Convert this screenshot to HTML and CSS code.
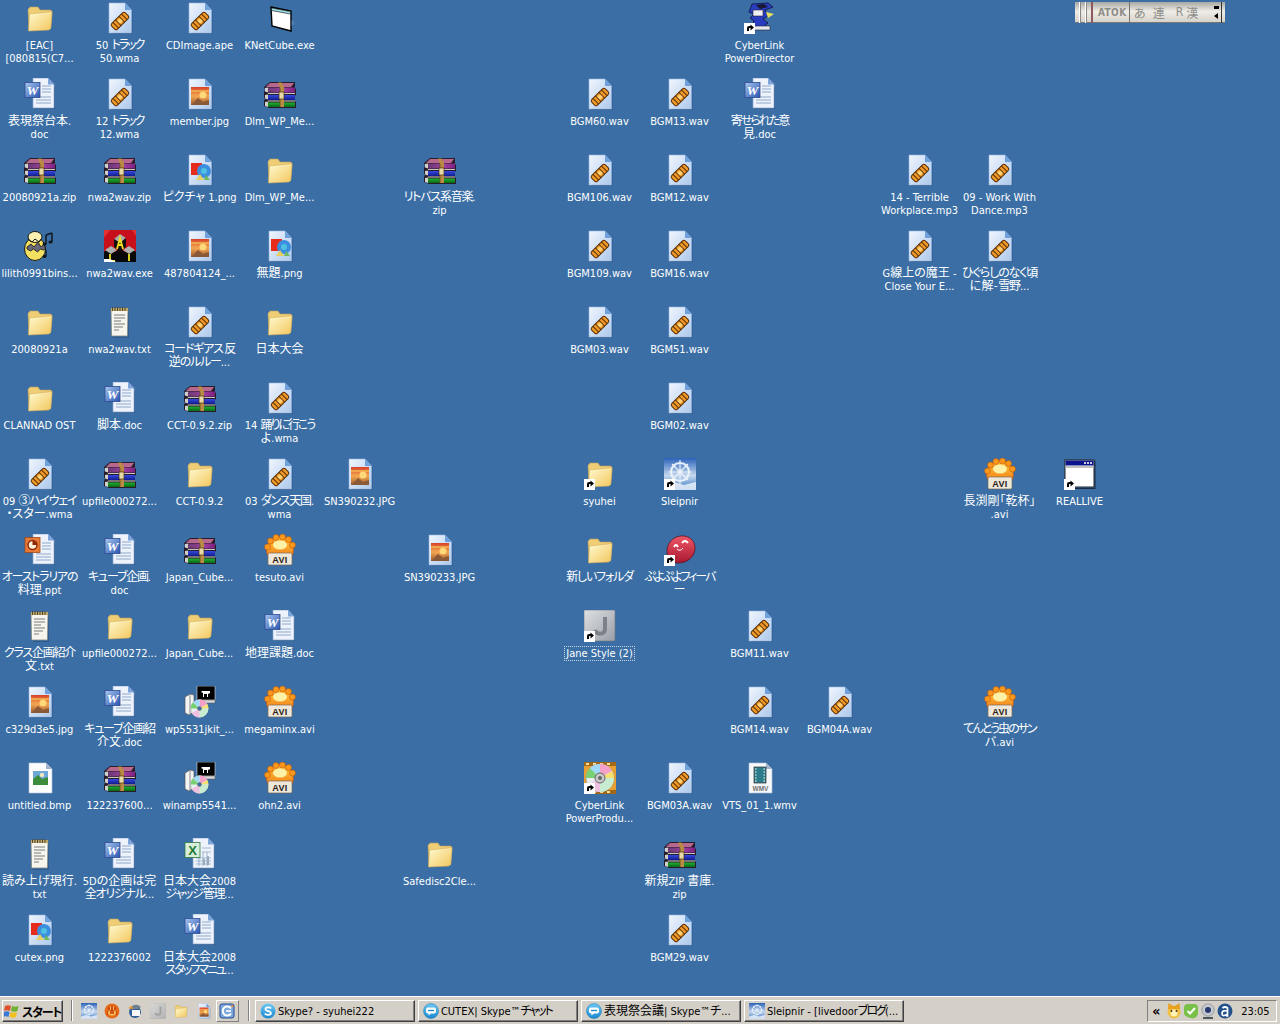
FILE: index.html
```html
<!DOCTYPE html>
<html lang="ja">
<head>
<meta charset="utf-8">
<title>Desktop</title>
<link rel="stylesheet" href="styles.css">
</head>
<body>
<svg class="defs" aria-hidden="true">
<defs>
<linearGradient id="gFolder" x1="0" y1="0" x2="1" y2="1"><stop offset="0" stop-color="#fffbd2"/><stop offset="1" stop-color="#f2c65c"/></linearGradient>
<linearGradient id="gPage" x1="0" y1="0" x2="1" y2="1"><stop offset="0" stop-color="#f0f6ff"/><stop offset="1" stop-color="#adc9ec"/></linearGradient>
<linearGradient id="gPic" x1="0" y1="0" x2="0" y2="1"><stop offset="0" stop-color="#d8402a"/><stop offset=".5" stop-color="#f4a850"/><stop offset="1" stop-color="#9c5a30"/></linearGradient>
<linearGradient id="gWord" x1="0" y1="0" x2="1" y2="1"><stop offset="0" stop-color="#a9c6ee"/><stop offset="1" stop-color="#2a55b0"/></linearGradient>
<linearGradient id="gAvi" x1="0" y1="0" x2="0" y2="1"><stop offset="0" stop-color="#ffc838"/><stop offset="1" stop-color="#ee6a12"/></linearGradient>
<linearGradient id="gSlp" x1="0" y1="0" x2="0" y2="1"><stop offset="0" stop-color="#2a62b8"/><stop offset=".55" stop-color="#c4d8ee"/><stop offset="1" stop-color="#3a78c4"/></linearGradient>
<linearGradient id="gJane" x1="0" y1="0" x2="1" y2="1"><stop offset="0" stop-color="#dfe1e4"/><stop offset="1" stop-color="#9a9ea6"/></linearGradient>
<linearGradient id="gPuyo" x1="0" y1="0" x2="0" y2="1"><stop offset="0" stop-color="#f05868"/><stop offset="1" stop-color="#a81830"/></linearGradient>
<linearGradient id="gSky" x1="0" y1="0" x2="0" y2="1"><stop offset="0" stop-color="#6cc8f4"/><stop offset="1" stop-color="#1a88d0"/></linearGradient>
<linearGradient id="gLid" x1="0" y1="0" x2="1" y2="0"><stop offset="0" stop-color="#6a3a70"/><stop offset=".6" stop-color="#a040a0"/><stop offset="1" stop-color="#7c2080"/></linearGradient>
<linearGradient id="gBlue" x1="0" y1="0" x2="0" y2="1"><stop offset="0" stop-color="#3848e0"/><stop offset="1" stop-color="#101c90"/></linearGradient>
<linearGradient id="gGreen" x1="0" y1="0" x2="0" y2="1"><stop offset="0" stop-color="#20b030"/><stop offset="1" stop-color="#086818"/></linearGradient>

<symbol id="cd" viewBox="0 0 32 32">
<circle cx="16" cy="16" r="15" fill="#e8eef0" stroke="#777" stroke-width=".5"/>
<path d="M16 16 16 1A15 15 0 0 1 29 8.500z" fill="#f4a0c8"/>
<path d="M16 16 29 8.500A15 15 0 0 1 31 16z" fill="#f8e070"/>
<path d="M16 16 1 16A15 15 0 0 1 5.400 5.400z" fill="#78d070"/>
<path d="M16 16 5.400 5.400A15 15 0 0 1 16 1z" fill="#a0d8f8"/>
<path d="M16 16 31 16A15 15 0 0 1 16 31z" fill="#c8ecd0"/>
<path d="M16 16 16 31A15 15 0 0 1 3 23.500z" fill="#f0c0e0"/>
</symbol>

<symbol id="folder" viewBox="0 0 32 32">
<path d="M5 28 4 7.500 6 5h8l2 3h11l1 2v2l-1.500 15z" fill="#efcd74" stroke="#b8a060" stroke-width=".6"/>
<path d="M4.500 29 5.500 12 28 9.500 26.800 26 25 28z" fill="url(#gFolder)" stroke="#d0ae5c" stroke-width=".6"/>
</symbol>

<symbol id="page" viewBox="0 0 32 32">
<path d="M28.500 9v23H7v-1h20.500V9z" fill="#1c3f6e" opacity=".45"/>
<path d="M5 1h16l6.500 7v23H5z" fill="url(#gPage)" stroke="#9ab6dc" stroke-width=".6"/>
<path d="M21 1v7h6.500z" fill="#6ea0dc"/>
</symbol>

<symbol id="wamp" viewBox="0 0 32 32">
<use href="#page"/>
<g transform="rotate(-45 16 19)">
<rect x="6.500" y="15" width="19" height="8" rx="2" fill="#f29a28" stroke="#5a3008" stroke-width="1"/>
<path d="M10 15v8M13.500 15v8M18.500 15v8M22 15v8" stroke="#5a3008" stroke-width="1"/>
<rect x="14" y="17" width="4" height="4" fill="#ffd070"/>
</g>
</symbol>

<symbol id="jpg" viewBox="0 0 32 32">
<use href="#page"/>
<rect x="7" y="9" width="18" height="18" fill="url(#gPic)"/>
<path d="M7 13h18" stroke="#f8e060" stroke-width="1"/>
<circle cx="19" cy="17" r="3.500" fill="#ffd878"/>
<path d="M7 27l7-7 5 4 6-2v5z" fill="#8a5a38"/>
</symbol>

<symbol id="png" viewBox="0 0 32 32">
<use href="#page"/>
<rect x="7" y="9" width="11" height="12" fill="#e82c1c"/>
<circle cx="20" cy="17" r="7" fill="#3c8ee0"/>
<circle cx="20" cy="17" r="3" fill="#50c0e0"/>
<path d="M12 26l4-6 4 6z" fill="#e8d060"/>
<path d="M20 26l2-5 4 5z" fill="#70b860"/>
</symbol>

<symbol id="rar" viewBox="0 0 32 32">
<path d="M0 9 6 4h25v6l1 1v6l-1 1v5l1 1v6H5l-5-2v-5l1-2-1-2v-5l1-2z" fill="#281c28"/>
<path d="M6 5h24l-3 4H2z" fill="#b8688c"/>
<path d="M4 9.500h27v5H4z" fill="url(#gLid)"/>
<path d="M4 17h27v5H4z" fill="url(#gBlue)"/>
<path d="M4 24.500h27V29H4z" fill="url(#gGreen)"/>
<path d="M1 10l3-.5v5l-3-1zM1 17l3-.5v5l-3-1zM1 24l3-.5V29l-3-1z" fill="#d0d0c8"/>
<path d="M4 15.500h27M4 23h27" stroke="#c8c8c0" stroke-width="1.200"/>
<path d="M14 4.500h3.500L20 9v20h-4V10z" fill="#b88c44"/>
<path d="M16 10v19" stroke="#704c18" stroke-width=".8"/>
<rect x="15" y="14" width="5" height="7" fill="#e8d8a8" stroke="#443010" stroke-width=".7"/>
</symbol>

<symbol id="word" viewBox="0 0 32 32">
<path d="M31 9v22H10v-1h20V9z" fill="#1c3f6e" opacity=".45"/>
<path d="M9 0h15l6 6.500V30H9z" fill="#eef3fb" stroke="#8aa4cc" stroke-width=".7"/>
<path d="M24 0v6.500h6z" fill="#7ea4dc"/>
<path d="M18 8h9M18 11h9M18 14h9M12 19h15M12 22h15M12 25h15" stroke="#8fa8cc" stroke-width="1"/>
<rect x="1" y="4.500" width="15" height="15" fill="url(#gWord)" stroke="#2c4c90" stroke-width=".8"/>
<text x="8.500" y="16.500" class="glyph gw" text-anchor="middle">W</text>
</symbol>

<symbol id="xls" viewBox="0 0 32 32">
<path d="M31 9v22H10v-1h20V9z" fill="#1c3f6e" opacity=".45"/>
<path d="M9 0h15l6 6.500V30H9z" fill="#eef3fb" stroke="#8aa4cc" stroke-width=".7"/>
<path d="M24 0v6.500h6z" fill="#7ea4dc"/>
<path d="M12 20h15M12 23h15M12 26h15M15 17v11M19 14v14M23 14v14M18 10h9M18 14h9" stroke="#8fa8cc" stroke-width=".8"/>
<rect x="1" y="4.500" width="15" height="15" fill="#d8eed8" stroke="#307a40" stroke-width=".8"/>
<text x="8.500" y="16.500" class="glyph gx" text-anchor="middle">X</text>
<path d="M19 27v-6h2v6zM23 27v-9h2v9z" fill="#9ab"/>
</symbol>

<symbol id="ppt" viewBox="0 0 32 32">
<path d="M31 9v22H10v-1h20V9z" fill="#1c3f6e" opacity=".45"/>
<path d="M9 0h15l6 6.500V30H9z" fill="#eef3fb" stroke="#8aa4cc" stroke-width=".7"/>
<path d="M24 0v6.500h6z" fill="#7ea4dc"/>
<path d="M18 9h9M18 12h9M18 15h9M12 20h15M12 23h15M12 26h15" stroke="#8fa8cc" stroke-width="1"/>
<rect x="1" y="3.500" width="15" height="15" fill="#e87a38" stroke="#a04818" stroke-width=".8"/>
<circle cx="8.500" cy="11" r="4.500" fill="#fff0d8" stroke="#902808" stroke-width="1.500"/>
<path d="M8.500 11V6.500A4.500 4.500 0 0 1 13 11z" fill="#902808"/>
</symbol>

<symbol id="note" viewBox="0 0 32 32">
<path d="M25 5v27H9v-1h15V5z" fill="#1c3f6e" opacity=".4"/>
<path d="M7 3h17l-.5 27H7.500z" fill="#f6f6ee" stroke="#7a7a70" stroke-width=".7"/>
<path d="M7 2h17v3H7z" fill="#c0a868"/>
<path d="M8.500 1v4M11 1v4M13.500 1v4M16 1v4M18.500 1v4M21 1v4" stroke="#504830" stroke-width="1"/>
<path d="M10 9h11M10 12h11M10 15h7M10 18h11M10 21h9M10 24h5" stroke="#7c7c78" stroke-width="1"/>
</symbol>

<symbol id="avi" viewBox="0 0 32 32">
<circle cx="16" cy="16" r="13.500" fill="url(#gAvi)" stroke="#c04a08" stroke-width=".6"/>
<g fill="#f8981c" stroke="#b84c08" stroke-width=".5">
<circle cx="3.500" cy="13" r="3"/><circle cx="6.500" cy="7" r="3"/><circle cx="12" cy="3.500" r="3"/><circle cx="18.500" cy="3" r="3"/><circle cx="24.500" cy="5.500" r="3"/><circle cx="28.500" cy="11" r="3"/>
</g>
<ellipse cx="16" cy="11" rx="7" ry="4.500" fill="#fff0a8"/>
<rect x="4" y="19" width="24" height="12" rx="1.500" fill="#eee7da" stroke="#7a6a58" stroke-width=".7"/>
<text x="16" y="29" class="glyph ga" text-anchor="middle">AVI</text>
</symbol>

<symbol id="setup" viewBox="0 0 32 32">
<path d="M1 11l5-3 4 1v17l-5 3-4-2z" fill="#f4f4f4" stroke="#555" stroke-width=".7"/>
<path d="M6 9v19" stroke="#888" stroke-width="1"/>
<rect x="13" y="0" width="18" height="14" fill="#000" stroke="#ddd" stroke-width=".6"/>
<path d="M18 5h8v2l-2 1v3h-1V8h-3v3h-1V7l-2-1z" fill="#fff"/>
<rect x="14" y="14" width="17" height="3" fill="#d8d8d8" stroke="#555" stroke-width=".5"/>
<use href="#cd" x="6" y="13" width="19" height="19"/>
<circle cx="15.500" cy="22.500" r="2" fill="#3a6ea5" stroke="#666" stroke-width=".5"/>
</symbol>

<symbol id="cube" viewBox="0 0 32 32">
<path d="M7 5 27 9v20L8 24z" fill="#fff" stroke="#000" stroke-width="1.400"/>
<path d="M7.500 6 26.500 9.500v2.500L7.500 8.500z" fill="#9fe0e8" stroke="#000" stroke-width=".6"/>
<path d="M27.500 18l4 3-4 3z" fill="#5f83ae" opacity=".7"/>
</symbol>

<symbol id="win" viewBox="0 0 32 32">
<rect x="1" y="2" width="29" height="27" fill="#fff" stroke="#222" stroke-width="1"/>
<path d="M30.500 3v27H3v1h28.500V3z" fill="#1a2a40"/>
<rect x="1.500" y="2.500" width="28" height="5" fill="#0c148c"/>
<path d="M20 5h2M23 5h2M26 5h2" stroke="#ccd" stroke-width="2"/>
<rect x="1.500" y="8" width="28" height="2" fill="#c0c0c0"/>
</symbol>

<symbol id="lilith" viewBox="0 0 32 32">
<ellipse cx="11" cy="19" rx="10.500" ry="11.500" fill="#f4e060" stroke="#1a1a1a" stroke-width="1"/>
<path d="M3 17 7 14l3 3 4-5 3 5 3-3 1.500 5-2 1-3-1-3 3-4-3-3 2-3.500-2z" fill="#68687a" stroke="#111" stroke-width=".8"/>
<ellipse cx="11" cy="7" rx="7" ry="5.500" fill="#fbf0b0" stroke="#1a1a1a" stroke-width="1"/>
<path d="M4 9l4 3 3-3 4 3 2-3" fill="none" stroke="#111" stroke-width="1"/>
<path d="M22 5v9M28 3v9M22 5l6-2" fill="none" stroke="#101820" stroke-width="1.500"/>
<ellipse cx="20.500" cy="14" rx="2" ry="1.500" fill="#101820"/><ellipse cx="26.500" cy="12" rx="2" ry="1.500" fill="#101820"/>
<path d="M22 20v6" stroke="#101820" stroke-width="1.300"/><ellipse cx="20.500" cy="26.500" rx="2" ry="1.500" fill="#101820"/>
</symbol>

<symbol id="nwa" viewBox="0 0 32 32">
<rect width="32" height="32" fill="#c8101c"/>
<path d="M0 0h6L0 8zM28 0h4v6zM0 27l6 5H0z" fill="#e83030"/>
<path d="M0 32V22l5-4 6 4 5-4 5 4 5-4 6 4v10z" fill="#080808"/>
<path d="M10 9l6-5 6 4-6 5z" fill="#a8a8a8"/><path d="M10 9v8l6 4v-8zM22 8v9l-6 4v-8z" fill="#101010"/>
<path d="M1 20l6-4 6 4-6 4zM19 20l6-4 6 4-6 4z" fill="#b0b0b0"/>
<path d="M13 19l3-11 3 11M14.500 15h3M6 24v7h5M25 24v7" fill="none" stroke="#f0e020" stroke-width="1.800"/>
<path d="M0 29h6l6 3H0z" fill="#fff"/>
</symbol>

<symbol id="bmp" viewBox="0 0 32 32">
<path d="M5 1h17l6 6v24H5z" fill="#fdfdfd" stroke="#b8c4d8" stroke-width=".6"/>
<path d="M22 1v6h6z" fill="#a0b4d0"/>
<rect x="9" y="9" width="15" height="14" fill="#6ea8d8"/>
<path d="M9 23v-6l5-4 4 4 6-2v8z" fill="#3c8c3c"/>
<circle cx="18" cy="13" r="2.200" fill="#f0e8c0"/>
</symbol>

<symbol id="wmv" viewBox="0 0 32 32">
<path d="M5 1h17l6 6v24H5z" fill="#f6f8fa" stroke="#b8c4d8" stroke-width=".6"/>
<path d="M22 1v6h6z" fill="#a0b4d0"/>
<rect x="10" y="5" width="12" height="16" fill="#2c7c8c" stroke="#333" stroke-width=".7"/>
<path d="M11 7h1.500M11 10h1.500M11 13h1.500M11 16h1.500M11 19h1.500M19.500 7H21M19.500 10H21M19.500 13H21M19.500 16H21M19.500 19H21" stroke="#fff" stroke-width="1.200"/>
<text x="16.500" y="29" class="glyph gv" text-anchor="middle">WMV</text>
</symbol>

<symbol id="slp" viewBox="0 0 32 32">
<rect width="32" height="32" fill="url(#gSlp)"/>
<circle cx="16" cy="14" r="9" fill="none" stroke="#e8f0fa" stroke-width="2.200"/>
<circle cx="16" cy="14" r="2.500" fill="#e8f0fa"/>
<path d="M16 2v24M4 14h24M8 6l16 16M24 6 8 22" stroke="#e8f0fa" stroke-width="1.200"/>
<path d="M0 27l10-3 10 3 12-3v8H0z" fill="#f4f8fc" opacity=".8"/>
</symbol>

<symbol id="puyo" viewBox="0 0 32 32">
<path d="M3 17C3 7 12 1 20 2s11 7 11 12c0 9-8 15-17 15-6 0-11-4-11-12z" fill="url(#gPuyo)" stroke="#601020" stroke-width=".8"/>
<path d="M10 13q2-4 4 0M18 9q3-4 6 0" fill="none" stroke="#fff" stroke-width="1.800"/>
<path d="M13 15q3 3 6-1" fill="none" stroke="#fff" stroke-width="1"/>
</symbol>

<symbol id="jane" viewBox="0 0 32 32">
<rect width="31" height="31" rx="1" fill="url(#gJane)" stroke="#6f7680" stroke-width=".6"/>
<path d="M21 7v12c0 6-9 6-10 1" fill="none" stroke="#7c8088" stroke-width="4"/>
</symbol>

<symbol id="prod" viewBox="0 0 32 32">
<rect width="32" height="32" fill="#e8a030"/>
<path d="M0 0h32v4H0zM0 28h32v4H0z" fill="#a06818"/>
<path d="M2 1h3v2H2zM9 1h3v2H9zM16 1h3v2h-3zM23 1h3v2h-3zM2 29h3v2H2zM9 29h3v2H9zM16 29h3v2h-3zM23 29h3v2h-3z" fill="#f8e0a0"/>
<use href="#cd" x="1" y="1" width="30" height="30"/>
<circle cx="16" cy="16" r="5" fill="#c8c8c8" stroke="#666" stroke-width="1"/>
<circle cx="16" cy="16" r="2" fill="#666"/>
</symbol>

<symbol id="dir" viewBox="0 0 32 32">
<path d="M8 2 24 1l5 4-8 3 3 6-5 3 5 4-6 5H8l2-7-4-3 4-4-5-2z" fill="#2a3cc0" stroke="#101040" stroke-width=".8"/>
<path d="M9 8h10v6H9z" fill="#f0f0f4" stroke="#223" stroke-width=".6"/>
<path d="M12 3l8-1 4 3-8 2z" fill="#181830"/>
<path d="M6 24h20v4H6z" fill="#e8e8f0" stroke="#223" stroke-width=".6"/>
<path d="M22 10l8 2-6 4z" fill="#e8e060"/>
</symbol>

<symbol id="lnk" viewBox="0 0 32 32">
<rect x="0" y="21" width="11" height="11" fill="#fff"/>
<path d="M3 29v-3q0-2 2-2h1.500V22.500L10 25.500 6.500 28.500V26H5.500q-.5 0-.5 1v2z" fill="#000"/>
</symbol>

<symbol id="flag" viewBox="0 0 16 16">
<path d="M1 3q3-1.500 6 0l-1 5q-3-1.500-6 0z" fill="#e0502c"/>
<path d="M8 3q3 1.500 6.500 0l-1 5q-3.500 1.500-6.500 0z" fill="#70b030"/>
<path d="M0 9q3-1.500 5.500 0l-1 5q-3-1.500-5.500 0z" fill="#3878d8"/>
<path d="M6.500 9q3 1.500 6.500 0l-1 5q-3.500 1.500-6.500 0z" fill="#f0c020"/>
</symbol>

<symbol id="skype" viewBox="0 0 16 16">
<circle cx="8" cy="8" r="7.500" fill="url(#gSky)"/>
<path d="M11 5.500C10 4 5.500 4 5.500 6.200 5.500 8.500 11 7.500 11 10c0 2.300-5 2.300-6.200.5" fill="none" stroke="#fff" stroke-width="1.800"/>
</symbol>

<symbol id="chat" viewBox="0 0 16 16">
<circle cx="8" cy="8" r="7.500" fill="url(#gSky)" stroke="#1a78b8" stroke-width=".5"/>
<path d="M3 6.500q0-2 2-2h6q2 0 2 2v2q0 2-2 2H8l-2.500 2v-2H5q-2 0-2-2z" fill="#fff"/>
<path d="M5 7.500h6" stroke="#1a88d0" stroke-width="1.300"/>
</symbol>

<symbol id="fox" viewBox="0 0 16 16">
<circle cx="8" cy="9" r="6.500" fill="#f2c040"/>
<circle cx="8" cy="10" r="3.500" fill="#fff4b8"/>
<path d="M2 6 2.500 0 7 3h2l4.500-3L14 6z" fill="#e8a020"/>
<circle cx="5.500" cy="8" r="1" fill="#503010"/><circle cx="10.500" cy="8" r="1" fill="#503010"/>
</symbol>

<symbol id="tbird" viewBox="0 0 16 16">
<circle cx="8" cy="9" r="6" fill="#2f5f98"/>
<path d="M2 7q3-6 9-5l3 2-3 2q-5 0-9 1z" fill="#708090"/>
<rect x="5" y="7" width="8" height="6" fill="#f8f8f8"/>
<path d="M1 5 5 3l1 3z" fill="#f09020"/>
</symbol>

<symbol id="ie" viewBox="0 0 16 16">
<rect x="1" y="1" width="14" height="14" rx="2" fill="#7ea8dc" stroke="#1c4c90"/>
<path d="M12 5.500a4.500 4.500 0 1 0 0 5" fill="none" stroke="#fff" stroke-width="2"/>
<path d="M7 8h5" stroke="#fff" stroke-width="1.600"/>
<path d="M13 1l2 3-3 0z" fill="#e83"/>
</symbol>

<symbol id="cam" viewBox="0 0 16 16">
<circle cx="8" cy="7" r="6.200" fill="#c4c8d0" stroke="#777a84" stroke-width=".6"/>
<circle cx="8" cy="7" r="3" fill="#2a3a70"/>
<path d="M3 14h10v2H3z" fill="#50545c"/>
</symbol>

<symbol id="green" viewBox="0 0 16 16">
<path d="M1 5q0-4 4-4h6q4 0 4 4v5q0 4-5 5.500Q1 14 1 10z" fill="#78c048"/>
<path d="M4.500 8 7 10.500 12 5" fill="none" stroke="#fff" stroke-width="2"/>
</symbol>

<symbol id="atray" viewBox="0 0 16 16">
<circle cx="8" cy="8" r="7.500" fill="#24508c"/>
<path d="M5.500 5q2.500-2 5 0v8h-1.500M10 8Q5 7 5 10.500t5 1" fill="none" stroke="#fff" stroke-width="1.700"/>
</symbol>

<symbol id="fire" viewBox="0 0 16 16">
<circle cx="8" cy="8" r="7.500" fill="#e86a18"/>
<circle cx="8" cy="8" r="4.500" fill="#f8c860"/>
<path d="M3 12 5 4l2 7 1-8 1 8 2-7 2 8" fill="none" stroke="#c83808" stroke-width="1"/>
</symbol>
</defs>
</svg>

<main class="desktop">
<div class="tile c0 r0"><svg class="ico"><use href="#folder"/></svg><span class="name">[EAC]<br>[080815(C7...</span></div>
<div class="tile c0 r1"><svg class="ico"><use href="#word"/></svg><span class="name"><span class="j">表現祭台本</span>.<br>doc</span></div>
<div class="tile c0 r2"><svg class="ico"><use href="#rar"/></svg><span class="name">20080921a.zip</span></div>
<div class="tile c0 r3"><svg class="ico"><use href="#lilith"/></svg><span class="name">lilith0991bins...</span></div>
<div class="tile c0 r4"><svg class="ico"><use href="#folder"/></svg><span class="name">20080921a</span></div>
<div class="tile c0 r5"><svg class="ico"><use href="#folder"/></svg><span class="name">CLANNAD OST</span></div>
<div class="tile c0 r6"><svg class="ico"><use href="#wamp"/></svg><span class="name">09 <span class="j k">③ハイウェイ</span><br><span class="j">・スター</span>.wma</span></div>
<div class="tile c0 r7"><svg class="ico"><use href="#ppt"/></svg><span class="name"><span class="j k">オーストラリアの</span><br><span class="j">料理</span>.ppt</span></div>
<div class="tile c0 r8"><svg class="ico"><use href="#note"/></svg><span class="name"><span class="j k">クラス企画紹介</span><br><span class="j">文</span>.txt</span></div>
<div class="tile c0 r9"><svg class="ico"><use href="#jpg"/></svg><span class="name">c329d3e5.jpg</span></div>
<div class="tile c0 r10"><svg class="ico"><use href="#bmp"/></svg><span class="name">untitled.bmp</span></div>
<div class="tile c0 r11"><svg class="ico"><use href="#note"/></svg><span class="name"><span class="j">読み上げ現行</span>.<br>txt</span></div>
<div class="tile c0 r12"><svg class="ico"><use href="#png"/></svg><span class="name">cutex.png</span></div>

<div class="tile c1 r0"><svg class="ico"><use href="#wamp"/></svg><span class="name">50 <span class="j kk">トラック</span><br>50.wma</span></div>
<div class="tile c1 r1"><svg class="ico"><use href="#wamp"/></svg><span class="name">12 <span class="j kk">トラック</span><br>12.wma</span></div>
<div class="tile c1 r2"><svg class="ico"><use href="#rar"/></svg><span class="name">nwa2wav.zip</span></div>
<div class="tile c1 r3"><svg class="ico"><use href="#nwa"/></svg><span class="name">nwa2wav.exe</span></div>
<div class="tile c1 r4"><svg class="ico"><use href="#note"/></svg><span class="name">nwa2wav.txt</span></div>
<div class="tile c1 r5"><svg class="ico"><use href="#word"/></svg><span class="name"><span class="j">脚本</span>.doc</span></div>
<div class="tile c1 r6"><svg class="ico"><use href="#rar"/></svg><span class="name">upfile000272...</span></div>
<div class="tile c1 r7"><svg class="ico"><use href="#word"/></svg><span class="name"><span class="j k">キューブ企画</span>.<br>doc</span></div>
<div class="tile c1 r8"><svg class="ico"><use href="#folder"/></svg><span class="name">upfile000272...</span></div>
<div class="tile c1 r9"><svg class="ico"><use href="#word"/></svg><span class="name"><span class="j k">キューブ企画紹</span><br><span class="j">介文</span>.doc</span></div>
<div class="tile c1 r10"><svg class="ico"><use href="#rar"/></svg><span class="name">122237600...</span></div>
<div class="tile c1 r11"><svg class="ico"><use href="#word"/></svg><span class="name">5D<span class="j">の企画は完</span><br><span class="j k">全オリジナル</span>...</span></div>
<div class="tile c1 r12"><svg class="ico"><use href="#folder"/></svg><span class="name">1222376002</span></div>

<div class="tile c2 r0"><svg class="ico"><use href="#wamp"/></svg><span class="name">CDImage.ape</span></div>
<div class="tile c2 r1"><svg class="ico"><use href="#jpg"/></svg><span class="name">member.jpg</span></div>
<div class="tile c2 r2"><svg class="ico"><use href="#png"/></svg><span class="name"><span class="j">ピクチャ</span> 1.png</span></div>
<div class="tile c2 r3"><svg class="ico"><use href="#jpg"/></svg><span class="name">487804124_...</span></div>
<div class="tile c2 r4"><svg class="ico"><use href="#wamp"/></svg><span class="name"><span class="j k">コードギアス 反</span><br><span class="j k">逆のルルー</span>...</span></div>
<div class="tile c2 r5"><svg class="ico"><use href="#rar"/></svg><span class="name">CCT-0.9.2.zip</span></div>
<div class="tile c2 r6"><svg class="ico"><use href="#folder"/></svg><span class="name">CCT-0.9.2</span></div>
<div class="tile c2 r7"><svg class="ico"><use href="#rar"/></svg><span class="name">Japan_Cube...</span></div>
<div class="tile c2 r8"><svg class="ico"><use href="#folder"/></svg><span class="name">Japan_Cube...</span></div>
<div class="tile c2 r9"><svg class="ico"><use href="#setup"/></svg><span class="name">wp5531jkit_...</span></div>
<div class="tile c2 r10"><svg class="ico"><use href="#setup"/></svg><span class="name">winamp5541...</span></div>
<div class="tile c2 r11"><svg class="ico"><use href="#xls"/></svg><span class="name"><span class="j">日本大会</span>2008<br><span class="j k">ジャッジ管理</span>...</span></div>
<div class="tile c2 r12"><svg class="ico"><use href="#word"/></svg><span class="name"><span class="j">日本大会</span>2008<br><span class="j kk">スタッフマニュ</span>...</span></div>

<div class="tile c3 r0"><svg class="ico"><use href="#cube"/></svg><span class="name">KNetCube.exe</span></div>
<div class="tile c3 r1"><svg class="ico"><use href="#rar"/></svg><span class="name">Dlm_WP_Me...</span></div>
<div class="tile c3 r2"><svg class="ico"><use href="#folder"/></svg><span class="name">Dlm_WP_Me...</span></div>
<div class="tile c3 r3"><svg class="ico"><use href="#png"/></svg><span class="name"><span class="j">無題</span>.png</span></div>
<div class="tile c3 r4"><svg class="ico"><use href="#folder"/></svg><span class="name"><span class="j">日本大会</span></span></div>
<div class="tile c3 r5"><svg class="ico"><use href="#wamp"/></svg><span class="name">14 <span class="j kk">踊りに行こう</span><br><span class="j">よ</span>.wma</span></div>
<div class="tile c3 r6"><svg class="ico"><use href="#wamp"/></svg><span class="name">03 <span class="j k">ダンス天国</span>.<br>wma</span></div>
<div class="tile c3 r7"><svg class="ico"><use href="#avi"/></svg><span class="name">tesuto.avi</span></div>
<div class="tile c3 r8"><svg class="ico"><use href="#word"/></svg><span class="name"><span class="j">地理課題</span>.doc</span></div>
<div class="tile c3 r9"><svg class="ico"><use href="#avi"/></svg><span class="name">megaminx.avi</span></div>
<div class="tile c3 r10"><svg class="ico"><use href="#avi"/></svg><span class="name">ohn2.avi</span></div>

<div class="tile c4 r6"><svg class="ico"><use href="#jpg"/></svg><span class="name">SN390232.JPG</span></div>

<div class="tile c5 r2"><svg class="ico"><use href="#rar"/></svg><span class="name"><span class="j k">リトバス系音楽</span>.<br>zip</span></div>
<div class="tile c5 r7"><svg class="ico"><use href="#jpg"/></svg><span class="name">SN390233.JPG</span></div>
<div class="tile c5 r11"><svg class="ico"><use href="#folder"/></svg><span class="name">Safedisc2Cle...</span></div>

<div class="tile c7 r1"><svg class="ico"><use href="#wamp"/></svg><span class="name">BGM60.wav</span></div>
<div class="tile c7 r2"><svg class="ico"><use href="#wamp"/></svg><span class="name">BGM106.wav</span></div>
<div class="tile c7 r3"><svg class="ico"><use href="#wamp"/></svg><span class="name">BGM109.wav</span></div>
<div class="tile c7 r4"><svg class="ico"><use href="#wamp"/></svg><span class="name">BGM03.wav</span></div>
<div class="tile c7 r6"><svg class="ico"><use href="#folder"/><use href="#lnk"/></svg><span class="name">syuhei</span></div>
<div class="tile c7 r7"><svg class="ico"><use href="#folder"/></svg><span class="name"><span class="j k">新しいフォルダ</span></span></div>
<div class="tile c7 r8"><svg class="ico"><use href="#jane"/><use href="#lnk"/></svg><span class="name focus">Jane Style (2)</span></div>
<div class="tile c7 r10"><svg class="ico"><use href="#prod"/><use href="#lnk"/></svg><span class="name">CyberLink<br>PowerProdu...</span></div>

<div class="tile c8 r1"><svg class="ico"><use href="#wamp"/></svg><span class="name">BGM13.wav</span></div>
<div class="tile c8 r2"><svg class="ico"><use href="#wamp"/></svg><span class="name">BGM12.wav</span></div>
<div class="tile c8 r3"><svg class="ico"><use href="#wamp"/></svg><span class="name">BGM16.wav</span></div>
<div class="tile c8 r4"><svg class="ico"><use href="#wamp"/></svg><span class="name">BGM51.wav</span></div>
<div class="tile c8 r5"><svg class="ico"><use href="#wamp"/></svg><span class="name">BGM02.wav</span></div>
<div class="tile c8 r6"><svg class="ico"><use href="#slp"/><use href="#lnk"/></svg><span class="name">Sleipnir</span></div>
<div class="tile c8 r7"><svg class="ico"><use href="#puyo"/><use href="#lnk"/></svg><span class="name"><span class="j kk">ぷよぷよフィーバ</span><br><span class="j">ー</span></span></div>
<div class="tile c8 r10"><svg class="ico"><use href="#wamp"/></svg><span class="name">BGM03A.wav</span></div>
<div class="tile c8 r11"><svg class="ico"><use href="#rar"/></svg><span class="name"><span class="j">新規</span>ZIP <span class="j">書庫</span>.<br>zip</span></div>
<div class="tile c8 r12"><svg class="ico"><use href="#wamp"/></svg><span class="name">BGM29.wav</span></div>

<div class="tile c9 r0"><svg class="ico"><use href="#dir"/><use href="#lnk"/></svg><span class="name">CyberLink<br>PowerDirector</span></div>
<div class="tile c9 r1"><svg class="ico"><use href="#word"/></svg><span class="name"><span class="j kk">寄せられた意</span><br><span class="j">見</span>.doc</span></div>
<div class="tile c9 r8"><svg class="ico"><use href="#wamp"/></svg><span class="name">BGM11.wav</span></div>
<div class="tile c9 r9"><svg class="ico"><use href="#wamp"/></svg><span class="name">BGM14.wav</span></div>
<div class="tile c9 r10"><svg class="ico"><use href="#wmv"/></svg><span class="name">VTS_01_1.wmv</span></div>

<div class="tile c10 r9"><svg class="ico"><use href="#wamp"/></svg><span class="name">BGM04A.wav</span></div>

<div class="tile c11 r2"><svg class="ico"><use href="#wamp"/></svg><span class="name">14 - Terrible<br>Workplace.mp3</span></div>
<div class="tile c11 r3"><svg class="ico"><use href="#wamp"/></svg><span class="name">G<span class="j">線上の魔王</span> -<br>Close Your E...</span></div>

<div class="tile c12 r2"><svg class="ico"><use href="#wamp"/></svg><span class="name">09 - Work With<br>Dance.mp3</span></div>
<div class="tile c12 r3"><svg class="ico"><use href="#wamp"/></svg><span class="name"><span class="j k">ひぐらしのなく頃</span><br><span class="j k">に 解 - 雪野</span>...</span></div>
<div class="tile c12 r6"><svg class="ico"><use href="#avi"/></svg><span class="name"><span class="j">長渕剛「乾杯」</span><br>.avi</span></div>
<div class="tile c12 r9"><svg class="ico"><use href="#avi"/></svg><span class="name"><span class="j kk">てんとう虫のサン</span><br><span class="j">バ</span>.avi</span></div>

<div class="tile c13 r6"><svg class="ico"><use href="#win"/><use href="#lnk"/></svg><span class="name">REALLIVE</span></div>

<aside class="atok">
<span class="grip"></span>
<span class="atok-name">ATOK</span>
<span class="atok-modes"><span class="j">あ</span><span class="j">連</span><span class="mode-r">R</span><span class="j">漢</span></span>
<span class="atok-end"><i class="mark"></i><i class="tri"></i></span>
</aside>
</main>

<footer class="taskbar">
<button class="start"><svg class="mini"><use href="#flag"/></svg><span class="start-label">スタート</span></button>
<span class="sep sep-a"></span>
<div class="quick">
<span class="qi"><svg class="mini"><use href="#slp"/></svg></span>
<span class="qi"><svg class="mini"><use href="#fire"/></svg></span>
<span class="qi"><svg class="mini"><use href="#tbird"/></svg></span>
<span class="qi faded"><svg class="mini"><use href="#jane"/></svg></span>
<span class="qi"><svg class="mini"><use href="#folder"/></svg></span>
<span class="qi"><svg class="mini"><use href="#jpg"/></svg></span>
<span class="qi hover"><svg class="mini"><use href="#ie"/></svg></span>
</div>
<span class="sep sep-b"></span>
<div class="tasks">
<div class="task"><svg class="mini"><use href="#skype"/></svg><span>Skype? - syuhei222</span></div>
<div class="task"><svg class="mini"><use href="#chat"/></svg><span>CUTEX| Skype™<span class="j kk">チャット</span></span></div>
<div class="task"><svg class="mini"><use href="#chat"/></svg><span><span class="j">表現祭会議</span>| Skype™<span class="j">チ</span>...</span></div>
<div class="task"><svg class="mini"><use href="#slp"/></svg><span>Sleipnir - [livedoor<span class="j kk">ブログ</span>(...</span></div>
</div>
<div class="tray">
<span class="chev">«</span>
<svg class="mini"><use href="#fox"/></svg>
<svg class="mini"><use href="#green"/></svg>
<svg class="mini"><use href="#cam"/></svg>
<svg class="mini"><use href="#atray"/></svg>
<span class="clock">23:05</span>
</div>
</footer>
</body>
</html>
```

FILE: styles.css
```css
* { box-sizing: border-box; }
html, body { margin: 0; height: 100%; }
body {
  width: 1280px;
  height: 1024px;
  overflow: hidden;
  display: flex;
  flex-direction: column;
  background: #3a6ea5;
  font-family: "DejaVu Sans Condensed", "DejaVu Sans", "Noto Sans CJK JP", sans-serif;
  font-stretch: condensed;
  font-size: 11px;
}
.defs { position: absolute; width: 0; height: 0; }
.j {
  font-size: 12px;
  line-height: 0;
  font-family: "Noto Sans CJK JP", sans-serif;
  font-feature-settings: "palt";
}
.k { letter-spacing: -1.2px; }
.kk { letter-spacing: -2px; }

.desktop {
  position: relative;
  flex: 1;
  display: grid;
  grid-template-columns: repeat(16, 80px);
  grid-template-rows: repeat(13, 76px);
  background: #3a6ea5;
}
.tile {
  width: 79px;
  display: flex;
  flex-direction: column;
  align-items: center;
  padding-top: 2px;
  color: #fff;
}
.ico { width: 32px; height: 32px; flex: none; overflow: visible; }
.name {
  margin-top: 5px;
  width: 78px;
  text-align: center;
  line-height: 13px;
  white-space: nowrap;
}
.name.focus {
  width: auto;
  margin-top: 4px;
  padding: 0 1px;
  border: 1px dotted #c8d4e2;
}
.glyph { font-family: "Liberation Sans", sans-serif; font-weight: 700; }
.gw { font-size: 13px; fill: #fff; font-style: italic; font-family: "Liberation Serif", serif; }
.gx { font-size: 13px; fill: #1f7a35; }
.ga { font-size: 9px; fill: #2a2018; letter-spacing: .4px; }
.gv { font-size: 6.500px; fill: #707070; }

.c0 { grid-column: 1; } .c1 { grid-column: 2; } .c2 { grid-column: 3; } .c3 { grid-column: 4; }
.c4 { grid-column: 5; } .c5 { grid-column: 6; } .c7 { grid-column: 8; } .c8 { grid-column: 9; }
.c9 { grid-column: 10; } .c10 { grid-column: 11; } .c11 { grid-column: 12; } .c12 { grid-column: 13; }
.c13 { grid-column: 14; }
.r0 { grid-row: 1; } .r1 { grid-row: 2; } .r2 { grid-row: 3; } .r3 { grid-row: 4; } .r4 { grid-row: 5; }
.r5 { grid-row: 6; } .r6 { grid-row: 7; } .r7 { grid-row: 8; } .r8 { grid-row: 9; } .r9 { grid-row: 10; }
.r10 { grid-row: 11; } .r11 { grid-row: 12; } .r12 { grid-row: 13; }

.atok {
  position: absolute;
  top: 2px;
  right: 55px;
  width: 150px;
  height: 21px;
  display: flex;
  align-items: center;
  color: #8d8d88;
  background: linear-gradient(#a8a8a4, #efece6 45%, #d4d0c8);
  box-shadow: inset 0 -1px #777;
}
.grip {
  width: 18px;
  height: 100%;
  border-right: 2px solid #8c5a5e;
  background: repeating-linear-gradient(90deg, transparent 0 4px, #fff 4px 5px, #888 5px 6px);
}
.atok-name {
  width: 37px;
  height: 100%;
  padding-left: 5px;
  line-height: 21px;
  font-size: 10px;
  font-weight: 700;
  letter-spacing: .4px;
  border-right: 1px solid #77736c;
}
.atok-modes {
  flex: 1;
  display: flex;
  align-items: center;
  gap: 7px;
  padding-left: 4px;
  font-size: 12px;
  line-height: 21px;
}
.mode-r { margin: 0 -4px 0 4px; }
.atok-end {
  width: 19px;
  height: 100%;
  display: flex;
  flex-direction: column;
  align-items: center;
  justify-content: space-between;
  padding: 4px 0 4px 8px;
  border-right: 1px solid #333;
  margin-right: 3px;
}
.mark { width: 5px; height: 3px; background: #000; }
.tri {
  width: 0;
  height: 0;
  border: 3px solid transparent;
  border-left-width: 0;
  border-right: 4px solid #000;
}

.taskbar {
  flex: none;
  height: 28px;
  display: flex;
  align-items: flex-start;
  padding: 3px 3px 0 2px;
  background: #d4d0c8;
  border-top: 1px solid #fff;
  box-shadow: 0 -1px #d4d0c8;
  color: #000;
}
.mini { width: 16px; height: 16px; flex: none; }
.start {
  width: 61px;
  height: 22px;
  display: flex;
  align-items: center;
  gap: 2px;
  padding: 0 0 0 1px;
  background: #d4d0c8;
  border: 1px solid;
  border-color: #fff #404040 #404040 #fff;
  box-shadow: inset -1px -1px #808080;
  font: inherit;
  color: #000;
  white-space: nowrap;
}
.start-label {
  font-family: "Noto Sans CJK JP", sans-serif;
  font-size: 12px;
  font-weight: 700;
  letter-spacing: -1.2px;
  font-feature-settings: "palt";
}
.sep {
  width: 2px;
  height: 21px;
  border-left: 1px solid #808080;
  border-right: 1px solid #fff;
}
.sep-a { margin: 0 5px 0 8px; }
.sep-b { margin: 0 5px 0 9px; }
.quick { display: flex; width: 161px; }
.qi {
  width: 23px;
  height: 22px;
  display: flex;
  align-items: center;
  justify-content: center;
}
.faded { opacity: .55; }
.hover { border: 1px solid; border-color: #fff #808080 #808080 #fff; }
.tasks { display: flex; gap: 3px; width: 893px; }
.task {
  width: 160px;
  height: 22px;
  display: flex;
  align-items: center;
  gap: 2px;
  padding-left: 4px;
  white-space: nowrap;
  overflow: hidden;
  background: #d4d0c8;
  border: 1px solid;
  border-color: #fff #404040 #404040 #fff;
  box-shadow: inset -1px -1px #808080;
}
.tray {
  width: 130px;
  height: 22px;
  margin-left: auto;
  display: flex;
  align-items: center;
  gap: 1px;
  padding-left: 4px;
  border: 1px solid;
  border-color: #808080 #fff #fff #808080;
}
.chev { width: 13px; font-size: 14px; font-weight: 700; line-height: 16px; }
.clock { margin-left: 7px; }
```
